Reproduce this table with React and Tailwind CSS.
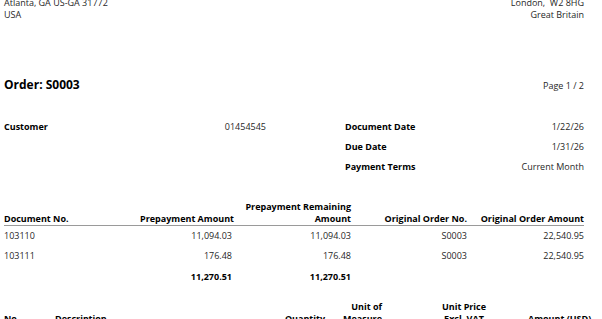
const prepayments = [
  { doc: '103110', amount: '11,094.03', remaining: '11,094.03', order: 'S0003', orderAmount: '22,540.95' },
  { doc: '103111', amount: '176.48', remaining: '176.48', order: 'S0003', orderAmount: '22,540.95' },
]

const cols = 'grid grid-cols-[136px_92px_119px_116px_117px]'

export default function App() {
  return (
    <div className="w-[602px] h-[319px] overflow-hidden bg-white pl-[4px] pr-[18px] font-['Open_Sans',sans-serif] text-[9px] leading-[12px] text-[#1f1f1f]">
      <div className="-mt-[3px] flex justify-between">
        <div>
          <div>Atlanta, GA US-GA 31772</div>
          <div>USA</div>
        </div>
        <div className="text-right">
          <div>London,&nbsp; W2 8HG</div>
          <div>Great Britain</div>
        </div>
      </div>

      <div className="mt-[56px] flex items-baseline justify-between">
        <h1 className="text-[12px] leading-[16px] font-bold text-black">Order: S0003</h1>
        <span>Page 1 / 2</span>
      </div>

      <div className="mt-[24px] flex">
        <div className="w-[262px]">
          <div className="flex h-[20px] justify-between leading-[20px]">
            <span className="font-bold text-black">Customer</span>
            <span>01454545</span>
          </div>
        </div>
        <div className="ml-auto w-[239px]">
          <div className="flex h-[20px] justify-between leading-[20px]">
            <span className="font-bold text-black">Document Date</span>
            <span>1/22/26</span>
          </div>
          <div className="flex h-[20px] justify-between leading-[20px]">
            <span className="font-bold text-black">Due Date</span>
            <span>1/31/26</span>
          </div>
          <div className="flex h-[20px] justify-between leading-[20px]">
            <span className="font-bold text-black">Payment Terms</span>
            <span>Current Month</span>
          </div>
        </div>
      </div>

      <div className={`${cols} mt-[24px] h-[25px] border-b border-[#9a9a9a] font-bold text-black`}>
        <div className="self-end">Document No.</div>
        <div className="self-end text-right whitespace-nowrap">Prepayment Amount</div>
        <div className="self-end text-right">
          Prepayment Remaining
          <br />
          Amount
        </div>
        <div className="self-end text-right whitespace-nowrap">Original Order No.</div>
        <div className="self-end text-right whitespace-nowrap">Original Order Amount</div>
      </div>

      {prepayments.map((p) => (
        <div key={p.doc} className={`${cols} h-[20px] leading-[20px]`}>
          <div>{p.doc}</div>
          <div className="text-right">{p.amount}</div>
          <div className="text-right">{p.remaining}</div>
          <div className="text-right">{p.order}</div>
          <div className="text-right">{p.orderAmount}</div>
        </div>
      ))}
      <div className={`${cols} mt-[1px] h-[20px] leading-[20px] font-bold text-black`}>
        <div />
        <div className="text-right">11,270.51</div>
        <div className="text-right">11,270.51</div>
        <div />
        <div />
      </div>

      <div className="mt-[14px] flex font-bold text-black">
        <div className="w-[51px] self-end">No.</div>
        <div className="flex-1 self-end">Description</div>
        <div className="w-[65px] self-end text-right">Quantity</div>
        <div className="w-[75px] self-end pr-[18px] text-right">
          Unit of
          <br />
          Measure
        </div>
        <div className="w-[128px] self-end text-center">
          Unit Price
          <br />
          Excl. VAT
        </div>
        <div className="w-[56px] self-end text-right whitespace-nowrap">Amount (USD)</div>
      </div>
    </div>
  )
}
